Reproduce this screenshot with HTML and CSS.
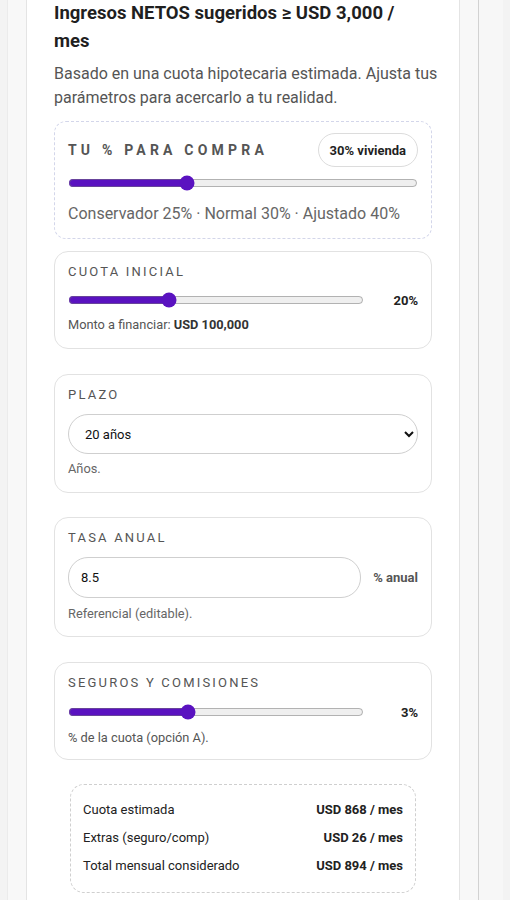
FILE: index.html
```html
<!DOCTYPE html>
<html lang="es">
<head>
<meta charset="utf-8">
<title>Ingresos sugeridos</title>
<link rel="stylesheet" href="styles.css">
</head>
<body>
<div class="page">
  <div class="frame">
    <section class="card">
      <h2 class="title">Ingresos NETOS sugeridos ≥ USD 3,000 / mes</h2>
      <p class="lead">Basado en una cuota hipotecaria estimada. Ajusta tus parámetros para acercarlo a tu realidad.</p>

      <div class="box box-dashed">
        <div class="box-head">
          <span class="label label-lg">TU % PARA COMPRA</span>
          <span class="pill">30% vivienda</span>
        </div>
        <input class="range range-full" type="range" min="10" max="70" value="30">
        <p class="hint hint-lg">Conservador 25% · Normal 30% · Ajustado 40%</p>
      </div>

      <div class="box box-down">
        <div class="label">CUOTA INICIAL</div>
        <div class="row">
          <input class="range" type="range" min="0" max="60" value="20">
          <span class="value">20%</span>
        </div>
        <p class="hint">Monto a financiar: <b>USD 100,000</b></p>
      </div>

      <div class="box box-term">
        <div class="label">PLAZO</div>
        <select class="select">
          <option>20 años</option>
        </select>
        <p class="hint hint-light">Años.</p>
      </div>

      <div class="box box-rate">
        <div class="label">TASA ANUAL</div>
        <div class="row">
          <input class="text-input" type="text" value="8.5">
          <span class="value value-muted">% anual</span>
        </div>
        <p class="hint hint-light">Referencial (editable).</p>
      </div>

      <div class="box box-fees">
        <div class="label">SEGUROS Y COMISIONES</div>
        <div class="row">
          <input class="range" type="range" min="1" max="6" step="0.5" value="3">
          <span class="value">3%</span>
        </div>
        <p class="hint">% de la cuota (opción A).</p>
      </div>

      <div class="summary">
        <div class="sum-row"><span>Cuota estimada</span><b>USD 868 / mes</b></div>
        <div class="sum-row"><span>Extras (seguro/comp)</span><b>USD 26 / mes</b></div>
        <div class="sum-row"><span>Total mensual considerado</span><b>USD 894 / mes</b></div>
      </div>
    </section>
  </div>
  <div class="rail"></div>
</div>
</body>
</html>
```

FILE: styles.css
```css
* { box-sizing: border-box; }

html, body {
  margin: 0;
  padding: 0;
}

body {
  background: #f3f3f3;
  font-family: Roboto, "Liberation Sans", Arial, sans-serif;
  color: #222;
  overflow: hidden;
}

.page {
  display: flex;
  height: 900px;
  padding-left: 7px;
  overflow: hidden;
}

.frame {
  width: 472px;
  background: #f8f8f8;
  border-left: 1px solid #ebebeb;
  border-right: 1px solid #d2d2d2;
  padding: 0 18px;
}

.rail {
  width: 24px;
  background: #f7f7f7;
}

.card {
  background: #fff;
  border: 1px solid #e4e4e4;
  border-top: none;
  border-bottom: none;
  padding: 0 27px 8px;
  min-height: 900px;
}

.title {
  margin: -1px 2px 0 0;
  font-size: 18.5px;
  line-height: 28px;
  font-weight: 700;
  color: #1f1f1f;
}

.lead {
  margin: 7px -12px 0 0;
  font-size: 16px;
  line-height: 24px;
  color: #555;
}

.box {
  border: 1px solid #e2e2e2;
  border-radius: 14px;
  padding: 12px 13px 13px;
}

.box-dashed {
  border: 1px dashed #d3d6ea;
  border-radius: 12px;
  padding: 11px 13px 12px;
  margin-top: 11px;
}

.box-down {
  margin-top: 12px;
  padding-bottom: 15px;
}

.box-term {
  margin-top: 25px;
  padding-bottom: 15px;
}

.box-rate {
  margin-top: 24px;
  padding-bottom: 14px;
}

.box-fees {
  margin-top: 25px;
  padding-bottom: 13px;
}

.box-head {
  display: flex;
  align-items: center;
  justify-content: space-between;
}

.label {
  font-size: 13px;
  line-height: 16px;
  letter-spacing: 2.2px;
  color: #555;
  margin-bottom: 11px;
}

.box-down .label {
  margin-bottom: 12px;
}

.box-fees .label {
  margin-bottom: 13px;
}

.label-lg {
  font-size: 14px;
  font-weight: 700;
  letter-spacing: 4.2px;
  margin-bottom: 0;
}

.pill {
  display: inline-flex;
  align-items: center;
  height: 34px;
  padding: 0 11px;
  border: 1px solid #dcdcdc;
  border-radius: 17px;
  font-size: 13px;
  font-weight: 700;
  color: #1f1f1f;
}

.row {
  display: flex;
  align-items: center;
  gap: 12px;
}

.range {
  display: block;
  margin: 0;
  width: 296px;
  height: 16px;
  accent-color: #5a12c0;
}

.range-full {
  width: 100%;
  margin-top: 8px;
}

.value {
  flex: 1;
  text-align: right;
  font-size: 13px;
  font-weight: 700;
  color: #222;
}

.value-muted {
  color: #555;
}

.hint {
  margin: 9px 0 0;
  font-size: 12.8px;
  line-height: 16px;
  color: #555;
}

.box-term .hint {
  margin-top: 7px;
}

.box-rate .hint {
  margin-top: 8px;
}

.box-fees .hint {
  margin-top: 10px;
}

.hint b {
  color: #333;
}

.hint-light {
  color: #666;
}

.hint-lg {
  margin-top: 11px;
  font-size: 16px;
  line-height: 24px;
  color: #666;
}

.select {
  display: block;
  width: 100%;
  height: 40px;
  margin: 0;
  padding: 0 8px 0 12px;
  border: 1px solid #cfcfcf;
  border-radius: 20px;
  background: #fff;
  font-family: Roboto, "Liberation Sans", Arial, sans-serif;
  font-size: 13px;
  color: #111;
}

.text-input {
  width: 293px;
  height: 41px;
  margin: 0;
  padding: 0 12px;
  border: 1px solid #cfcfcf;
  border-radius: 20px;
  background: #fff;
  font-family: Roboto, "Liberation Sans", Arial, sans-serif;
  font-size: 13px;
  color: #111;
}

.summary {
  margin: 24px 16px 0;
  border: 1px dashed #cfcfcf;
  border-radius: 14px;
  padding: 17px 12px 18px;
  display: flex;
  flex-direction: column;
  gap: 12px;
}

.sum-row {
  display: flex;
  justify-content: space-between;
  font-size: 13px;
  line-height: 16px;
  color: #222;
}

.sum-row b {
  font-weight: 700;
}
```
